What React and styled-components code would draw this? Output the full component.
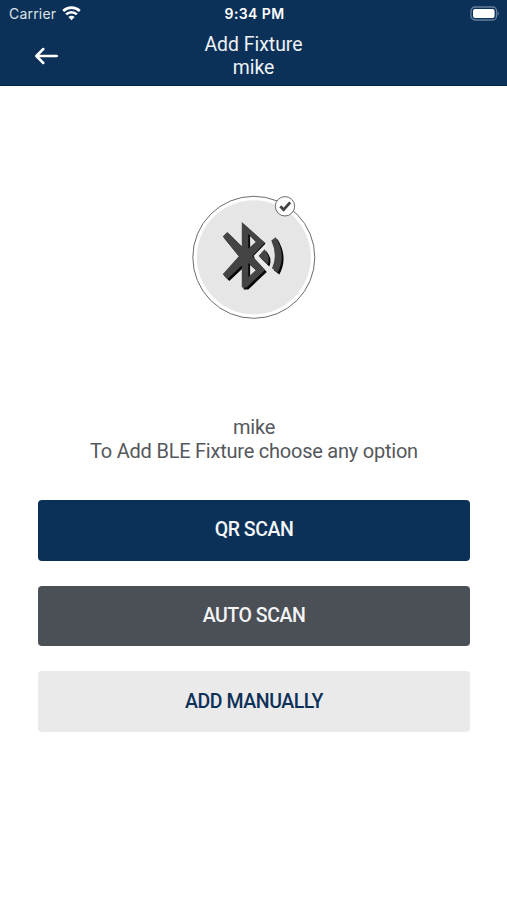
import React from 'react';
import styled, { createGlobalStyle } from 'styled-components';

const GlobalStyle = createGlobalStyle`
    body {
        margin: 0;
        background: #fff;
        font-family: Roboto, "Liberation Sans", sans-serif;
    }
`

const Screen = styled.div`
    height: 900px;
    display: flex;
    flex-direction: column;
    overflow: hidden;
`

const Header = styled.header`
    box-sizing: border-box;
    height: 86px;
    background: #0c3158;
    color: #fff;
    border-bottom: 1px solid #082848;
`

const StatusBar = styled.div`
    height: 27px;
    display: grid;
    grid-template-columns: 1fr auto 1fr;
    align-items: center;
    padding: 0 7px 0 9px;
    box-sizing: border-box;
    font-family: Inter, sans-serif;
`

const Carrier = styled.div`
    display: flex;
    align-items: center;
    gap: 6px;
    font-size: 14px;
    letter-spacing: 0.2px;
    color: #dde4eb;
`

const Clock = styled.div`
    font-size: 14px;
    font-weight: 600;
    letter-spacing: 0.4px;
`

const Battery = styled.svg`
    justify-self: end;
`

const NavBar = styled.div`
    display: grid;
    grid-template-columns: 80px 1fr 80px;
    align-items: center;
    height: 57px;
`

const BackButton = styled.button`
    display: flex;
    padding: 0 0 0 34px;
    border: none;
    background: none;
    cursor: pointer;
`

const Title = styled.h1`
    margin: 0;
    font-size: 19.4px;
    font-weight: 400;
    line-height: 23px;
    text-align: center;
    color: #eef2f6;
`

const Content = styled.main`
    display: flex;
    flex-direction: column;
    align-items: center;
    padding: 101px 37px 0 38px;
`

const Illustration = styled.div`
    display: flex;
    height: 140px;
`

const Message = styled.div`
    margin-top: 88px;
    font-size: 20px;
    line-height: 24px;
    letter-spacing: -0.23px;
    text-align: center;
    color: #55585c;
`

const Line = styled.p`
    margin: 0;
    white-space: nowrap;
`

const Actions = styled.div`
    align-self: stretch;
    display: flex;
    flex-direction: column;
    gap: 24.8px;
    margin-top: 37px;
`

const ActionButton = styled.button`
    height: 60.8px;
    padding: 0 0 1px;
    border: none;
    border-radius: 4px;
    background: ${props => props.$bg};
    color: ${props => props.$color};
    font-family: inherit;
    font-size: 19.5px;
    font-weight: 500;
    letter-spacing: -0.45px;
    cursor: pointer;
`

const WifiIcon = () => (
    <svg width="19" height="15" viewBox="0 0 19 15" fill="none" stroke="#fff" strokeWidth="2.6">
        <path d="M1.2 5 A12 12 0 0 1 17.8 5" />
        <path d="M4.1 8.4 A7.8 7.8 0 0 1 14.9 8.4" />
        <path d="M9.5 14.2 L6.4 11 A4.4 4.4 0 0 1 12.6 11 Z" fill="#fff" stroke="none" />
    </svg>
)

const BatteryIcon = () => (
    <Battery width="30" height="15" viewBox="0 0 30 15">
        <rect x="1" y="1" width="25.6" height="13" rx="4" fill="none" stroke="#667f9a" strokeWidth="1.3" />
        <rect x="3" y="3" width="21.6" height="9" rx="2" fill="#fff" />
        <path d="M27.8 5 Q30 7.5 27.8 10 Z" fill="#667f9a" />
    </Battery>
)

const BackIcon = () => (
    <svg width="25" height="18" viewBox="0 0 25 18" fill="none" stroke="#fff" strokeWidth="2.5" strokeLinecap="round" strokeLinejoin="round">
        <path d="M22.8 9 H2.5 M9.3 2 L2.3 9 L9.3 16" />
    </svg>
)

const BluetoothShape = () => (
    <>
        <path d="M57.8 35 L81 55.7 L68.2 69 L81 83 L62.5 100.5 L57.8 100.5 L57.8 78.5 L43.5 92 L38.7 87.2 L54.8 69.3 L38.7 49.5 L43.3 45 L57.8 59.2 Z M64.3 47 V61.5 L72 54.7 Z M64.3 76 V90 L72 83 Z" />
        <path d="M74.5 69 L80.3 62 Q87 69.5 83.5 77.5 Z" />
        <path d="M87.3 53.5 L91.8 50.3 Q102.8 68.5 93.5 85.5 L88 81.2 Q94 68 87.3 53.5 Z" />
    </>
)

const BluetoothBadge = () => (
    <svg width="140" height="140" viewBox="0 0 140 140">
        <circle cx="69.8" cy="70.3" r="61" fill="#fff" stroke="#6c6c6c" strokeWidth="1" />
        <circle cx="69.8" cy="70.3" r="57" fill="#e6e6e6" />
        <g fill="#050505" fillRule="evenodd" transform="translate(1.8 2)">
            <BluetoothShape />
        </g>
        <g fill="#444" fillRule="evenodd">
            <BluetoothShape />
        </g>
        <path d="M83.3 57.2 L71.7 69 L84.7 82" fill="none" stroke="#ececec" strokeWidth="3.2" />
        <circle cx="101" cy="19.3" r="9.7" fill="#fff" stroke="#6c6c6c" strokeWidth="1" />
        <path d="M96.3 19.3 L99.6 22.8 L106.2 15.4" fill="none" stroke="#444" strokeWidth="2.8" />
    </svg>
)

const ACTIONS = [
    { label: 'QR SCAN', bg: '#0c3158', color: '#f4f6f8' },
    { label: 'AUTO SCAN', bg: '#4b4f56', color: '#f4f4f5' },
    { label: 'ADD MANUALLY', bg: '#eaeaea', color: '#0c3158' },
]

const App = () => (
    <Screen>
        <GlobalStyle />
        <Header>
            <StatusBar>
                <Carrier>Carrier <WifiIcon /></Carrier>
                <Clock>9:34 PM</Clock>
                <BatteryIcon />
            </StatusBar>
            <NavBar>
                <BackButton aria-label="Back"><BackIcon /></BackButton>
                <Title>Add Fixture<br />mike</Title>
            </NavBar>
        </Header>
        <Content>
            <Illustration><BluetoothBadge /></Illustration>
            <Message>
                <Line>mike</Line>
                <Line>To Add BLE Fixture choose any option</Line>
            </Message>
            <Actions>
                {ACTIONS.map(({ label, bg, color }) => (
                    <ActionButton key={label} $bg={bg} $color={color}>{label}</ActionButton>
                ))}
            </Actions>
        </Content>
    </Screen>
)

export default App;
